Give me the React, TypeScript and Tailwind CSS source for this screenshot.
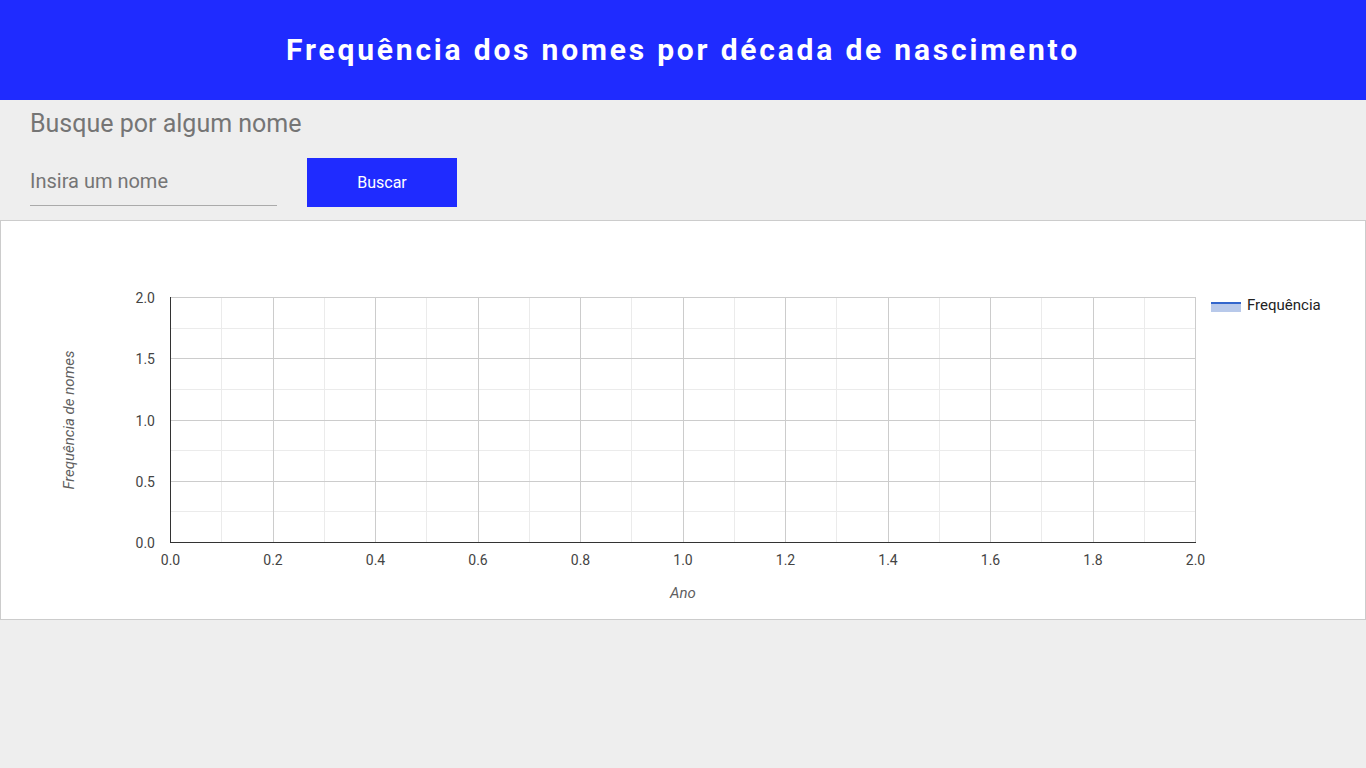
const xTicks = [0, 0.2, 0.4, 0.6, 0.8, 1.0, 1.2, 1.4, 1.6, 1.8, 2.0];
const yTicks = [2.0, 1.5, 1.0, 0.5, 0.0];

// plot area inside the card svg
const L = 169;
const R = 1194;
const T = 76;
const B = 321;

const ChartCard = () => {
  const w = R - L;
  const h = B - T;
  return (
    <div className="bg-white border border-[#cccccc] h-[400px]">
      <svg width="1364" height="398" className="block" style={{ fontFamily: "Roboto, sans-serif" }}>
        {/* minor grid */}
        {Array.from({ length: 10 }).map((_, i) => {
          const x = Math.round(L + (w / 10) * (i + 0.5)) + 0.5;
          return <line key={"mx" + i} x1={x} x2={x} y1={T} y2={B} stroke="#ebebeb" />;
        })}
        {Array.from({ length: 4 }).map((_, i) => {
          const y = Math.round(T + (h / 4) * (i + 0.5)) + 0.5;
          return <line key={"my" + i} x1={L} x2={R} y1={y} y2={y} stroke="#ebebeb" />;
        })}
        {/* major grid */}
        {xTicks.map((_, i) => {
          const x = Math.round(L + (w / 10) * i) + 0.5;
          return <line key={"x" + i} x1={x} x2={x} y1={T} y2={B} stroke="#cccccc" />;
        })}
        {yTicks.map((_, i) => {
          const y = Math.round(T + (h / 4) * i) + 0.5;
          return <line key={"y" + i} x1={L} x2={R} y1={y} y2={y} stroke="#cccccc" />;
        })}
        {/* axes */}
        <line x1={L + 0.5} x2={L + 0.5} y1={T} y2={B + 1} stroke="#333333" />
        <line x1={L} x2={R + 1} y1={B + 0.5} y2={B + 0.5} stroke="#333333" />

        {yTicks.map((v, i) => (
          <text key={"yl" + i} x={154} y={Math.round(T + (h / 4) * i) + 6} textAnchor="end" fontSize="14" fill="#444444">
            {v.toFixed(1)}
          </text>
        ))}
        {xTicks.map((v, i) => (
          <text key={"xl" + i} x={L + (w / 10) * i + 0.5} y={344} textAnchor="middle" fontSize="14" fill="#444444">
            {v.toFixed(1)}
          </text>
        ))}

        <text x={682} y={377} textAnchor="middle" fontSize="15" fontStyle="italic" fill="#5f5f5f">
          Ano
        </text>
        <text
          x={0}
          y={0}
          transform="translate(73 199) rotate(-90)"
          textAnchor="middle"
          fontSize="15"
          fontStyle="italic"
          fill="#5f5f5f"
        >
          Frequência de nomes
        </text>

        {/* legend */}
        <rect x={1210} y={82} width={30} height={9} fill="#b8c9ea" />
        <rect x={1210} y={81} width={30} height={2} fill="#3366cc" />
        <text x={1246} y={89} fontSize="15" fill="#222222">
          Frequência
        </text>
      </svg>
    </div>
  );
};

const App = () => {
  return (
    <div className="min-h-[768px] bg-[#eeeeee] font-['Roboto',sans-serif]">
      <header className="h-[100px] bg-[#1f2bff] flex items-center justify-center">
        <h1 className="text-white text-[30px] font-bold tracking-[2.8px] leading-none">
          Frequência dos nomes por década de nascimento
        </h1>
      </header>

      <div className="px-[30px] pt-[10px]">
        <h2 className="text-[25px] leading-[28px] text-[#757575]">Busque por algum nome</h2>
        <div className="flex items-start mt-[20px] h-[62px]">
          <div className="w-[247px] h-[48px] border-b border-[#aaaaaa] flex items-center">
            <span className="text-[20px] text-[#757575] leading-none -mt-[1px]">Insira um nome</span>
          </div>
          <button className="ml-[30px] w-[150px] h-[49px] bg-[#1f2bff] text-white text-[16px]">
            Buscar
          </button>
        </div>
      </div>

      <ChartCard />
    </div>
  );
};

export default App;
